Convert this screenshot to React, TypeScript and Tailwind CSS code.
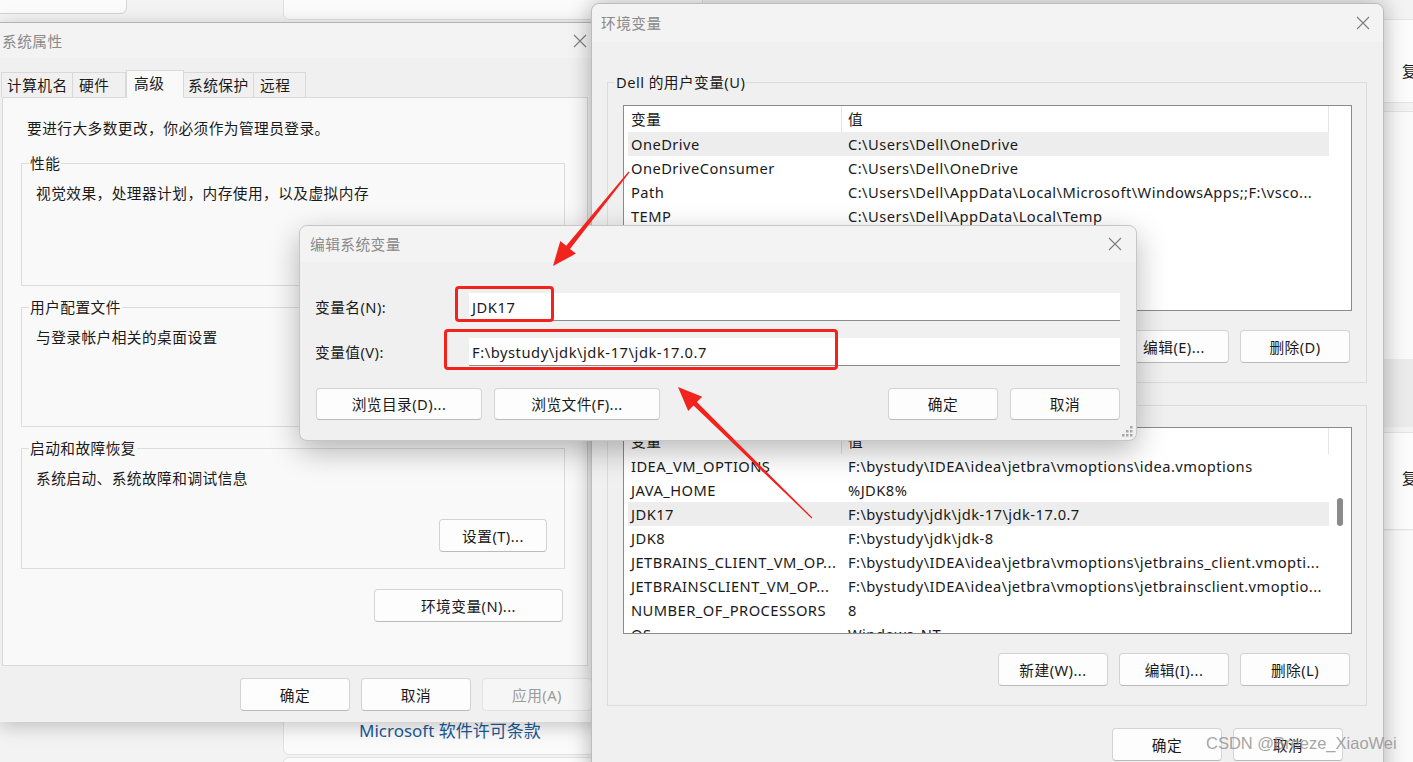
import React from 'react';

type Row = [string, string];

const userRows: Row[] = [
  ['OneDrive', 'C:\\Users\\Dell\\OneDrive'],
  ['OneDriveConsumer', 'C:\\Users\\Dell\\OneDrive'],
  ['Path', 'C:\\Users\\Dell\\AppData\\Local\\Microsoft\\WindowsApps;;F:\\vsco...'],
  ['TEMP', 'C:\\Users\\Dell\\AppData\\Local\\Temp'],
  ['TMP', 'C:\\Users\\Dell\\AppData\\Local\\Temp'],
];

const sysRows: Row[] = [
  ['IDEA_VM_OPTIONS', 'F:\\bystudy\\IDEA\\idea\\jetbra\\vmoptions\\idea.vmoptions'],
  ['JAVA_HOME', '%JDK8%'],
  ['JDK17', 'F:\\bystudy\\jdk\\jdk-17\\jdk-17.0.7'],
  ['JDK8', 'F:\\bystudy\\jdk\\jdk-8'],
  ['JETBRAINS_CLIENT_VM_OP...', 'F:\\bystudy\\IDEA\\idea\\jetbra\\vmoptions\\jetbrains_client.vmopti...'],
  ['JETBRAINSCLIENT_VM_OP...', 'F:\\bystudy\\IDEA\\idea\\jetbra\\vmoptions\\jetbrainsclient.vmoptio...'],
  ['NUMBER_OF_PROCESSORS', '8'],
  ['OS', 'Windows_NT'],
];

function CloseX() {
  return (
    <svg width="14" height="14" viewBox="0 0 14 14" className="shrink-0">
      <path d="M1 1L13 13M13 1L1 13" stroke="#7d7d7d" strokeWidth="1.1" />
    </svg>
  );
}

function Btn({
  children,
  className = 'w-[110px] h-[33px]',
  disabled = false,
}: {
  children: React.ReactNode;
  className?: string;
  disabled?: boolean;
}) {
  return (
    <div
      className={`${className} shrink-0 rounded-[4px] border flex items-center justify-center whitespace-nowrap ${
        disabled
          ? 'bg-[#f6f6f6] border-[#e3e3e3] text-[#9b9b9b]'
          : 'bg-[#fdfdfd] border-[#d3d3d3] border-b-[#bababa]'
      }`}
    >
      {children}
    </div>
  );
}

function Group({ label, className, children }: { label: string; className: string; children: React.ReactNode }) {
  return (
    <fieldset className={`border border-[#dcdcdc] ${className}`}>
      <legend className="ml-[7px] px-[1px] leading-[20px]">{label}</legend>
      {children}
    </fieldset>
  );
}

function ListView({ rows, active, h, thumb = false }: { rows: Row[]; active: number; h: string; thumb?: boolean }) {
  return (
    <div className={`ml-[15px] w-[729px] ${h} shrink-0 border border-[#8b8b8b] bg-white flex overflow-hidden`}>
      <div className="w-[705px] flex flex-col">
        <div className="h-[26px] shrink-0 flex">
          <div className="w-[218px] border-r border-[#e5e5e5] pl-[7px] flex items-center">变量</div>
          <div className="w-[487px] border-r border-[#e5e5e5] pl-[6px] flex items-center">值</div>
        </div>
        {rows.map((r, i) => (
          <div
            key={r[0]}
            className={`ml-[4px] w-[701px] h-[24px] shrink-0 flex items-center whitespace-nowrap ${
              i === active ? 'bg-[#ededed]' : ''
            }`}
          >
            <div className="w-[214px] pl-[3px] overflow-hidden">{r[0]}</div>
            <div className="pl-[6px] overflow-hidden">{r[1]}</div>
          </div>
        ))}
      </div>
      <div className="w-[22px] flex justify-center">
        {thumb && <div className="mt-[70px] w-[6px] h-[28px] rounded-[3px] bg-[#8a8a8a]" />}
      </div>
    </div>
  );
}

function Backdrop() {
  return (
    <>
      <div className="absolute left-[-10px] top-[-10px] w-[137px] h-[24px] rounded-[6px] border border-[#d4d4d4] bg-[#fbfbfb]" />
      <div className="absolute left-[283px] top-[-10px] w-[420px] h-[30px] rounded-[6px] border border-[#e1e1e1] bg-[#fbfbfb]" />
      <div className="absolute left-[283px] top-[690px] w-[420px] h-[65px] rounded-[6px] border border-[#e1e1e1] bg-[#fbfbfb] pt-[29px] pl-[75px]">
        <span className="text-[17px] leading-[22px] tracking-normal text-[#1d5a96] whitespace-nowrap">Microsoft 软件许可条款</span>
      </div>
      <div className="absolute left-[283px] top-[757px] w-[420px] h-[30px] rounded-[6px] border border-[#e1e1e1] bg-[#fbfbfb]" />

      <div className="absolute left-[1375px] top-[19px] w-[60px] h-[84px] border-y border-[#e3e3e3] bg-[#fcfcfc] pt-[41px] pl-[27px]">
        <span>复</span>
      </div>
      <div className="absolute left-[1375px] top-[111px] w-[60px] h-[248px] border-t border-[#e3e3e3] bg-[#fafafa]" />
      <div className="absolute left-[1375px] top-[359px] w-[60px] h-[68px] bg-[#ebebeb]" />
      <div className="absolute left-[1375px] top-[432px] w-[60px] h-[98px] border-y border-[#e3e3e3] bg-[#fcfcfc] pt-[35px] pl-[27px]">
        <span>复</span>
      </div>
      <div className="absolute left-[1375px] top-[531px] w-[60px] h-[240px] bg-[#fafafa]" />
    </>
  );
}

function Tab({ w, pl, active = false, children }: { w: string; pl: string; active?: boolean; children: React.ReactNode }) {
  return (
    <div
      className={`${w} ${pl} shrink-0 border border-b-0 border-[#d9d9d9] flex items-center ${
        active ? 'h-[28px] mb-[-1px] bg-[#f9f9f9] relative z-10 pb-[3px]' : 'h-[25px] bg-[#f0f0f0] -ml-px'
      }`}
    >
      {children}
    </div>
  );
}

function SystemProps() {
  return (
    <div className="absolute left-0 top-[22px] w-[600px] h-[700px] bg-[#f0f0f0] border-t border-[#b4b4b4] shadow-[0_4px_18px_rgba(0,0,0,0.22)] flex flex-col">
      <div className="h-[35px] shrink-0 bg-[#f3f3f3] flex items-center justify-between pl-[2px] pr-[13px]">
        <span className="text-[#8a8a8a]">系统属性</span>
        <CloseX />
      </div>
      <div className="pl-[2px] pt-[12px] flex flex-col">
        <div className="flex items-end h-[27px]">
          <Tab w="w-[72px]" pl="pl-[5px]">计算机名</Tab>
          <Tab w="w-[54px]" pl="pl-[6px]">硬件</Tab>
          <Tab w="w-[58px]" pl="pl-[7px]" active>
            高级
          </Tab>
          <Tab w="w-[71px]" pl="pl-[4px]">系统保护</Tab>
          <Tab w="w-[53px]" pl="pl-[6px]">远程</Tab>
        </div>
        <div className="w-[586px] h-[569px] shrink-0 border border-[#d9d9d9] bg-[#f9f9f9] pl-[18px] pt-[20px] flex flex-col">
          <div className="pl-[6px]">要进行大多数更改，你必须作为管理员登录。</div>
          <Group label="性能" className="mt-[15px] w-[544px]">
            <div className="h-[112px] pl-[14px] pt-[10px]">视觉效果，处理器计划，内存使用，以及虚拟内存</div>
          </Group>
          <Group label="用户配置文件" className="mt-[11px] w-[544px]">
            <div className="h-[109px] pl-[14px] pt-[10px]">与登录帐户相关的桌面设置</div>
          </Group>
          <Group label="启动和故障恢复" className="mt-[11px] w-[544px]">
            <div className="h-[110px] pl-[14px] pt-[10px] flex flex-col">
              <div>系统启动、系统故障和调试信息</div>
              <div className="mt-[31px] self-end mr-[17px]">
                <Btn className="w-[108px] h-[33px]">设置(T)...</Btn>
              </div>
            </div>
          </Group>
          <div className="mt-[20px] w-[544px] flex justify-end pr-[2px]">
            <Btn className="w-[189px] h-[33px]">环境变量(N)...</Btn>
          </div>
        </div>
        <div className="mt-[12px] ml-[238px] flex gap-[11px]">
          <Btn>确定</Btn>
          <Btn>取消</Btn>
          <Btn disabled>应用(A)</Btn>
        </div>
      </div>
    </div>
  );
}

function EnvWindow() {
  return (
    <div className="absolute left-[591px] top-[3px] w-[793px] h-[790px] rounded-t-[8px] border border-[#bdbdbd] bg-[#f0f0f0] shadow-[0_0_22px_rgba(0,0,0,0.3)] flex flex-col">
      <div className="h-[38px] shrink-0 rounded-t-[8px] bg-[#f3f3f3] flex items-center justify-between pl-[9px] pr-[13px]">
        <span className="text-[#8a8a8a]">环境变量</span>
        <CloseX />
      </div>
      <div className="pl-[15px] flex flex-col">
        <Group label="Dell 的用户变量(U)" className="mt-[30px] w-[760px]">
          <div className="pt-[13px] pb-[19px] flex flex-col">
            <ListView rows={userRows} active={0} h="h-[206px]" />
            <div className="mt-[19px] pr-[16px] flex justify-end gap-[11px]">
              <Btn>新建(N)...</Btn>
              <Btn>编辑(E)...</Btn>
              <Btn>删除(D)</Btn>
            </div>
          </div>
        </Group>
        <Group label="系统变量(S)" className="mt-[12px] w-[760px]">
          <div className="pt-[12px] pb-[19px] flex flex-col">
            <ListView rows={sysRows} active={2} h="h-[207px]" thumb />
            <div className="mt-[19px] pr-[16px] flex justify-end gap-[11px]">
              <Btn>新建(W)...</Btn>
              <Btn>编辑(I)...</Btn>
              <Btn>删除(L)</Btn>
            </div>
          </div>
        </Group>
        <div className="mt-[22px] w-[760px] pr-[24px] flex justify-end gap-[11px]">
          <Btn>确定</Btn>
          <Btn>取消</Btn>
        </div>
      </div>
    </div>
  );
}

function Field({ label, value, className }: { label: string; value: string; className: string }) {
  return (
    <div className={`${className} flex items-center`}>
      <div className="w-[154px] shrink-0">{label}</div>
      <div className="w-[651px] h-[28px] bg-white border-b border-[#8c8c8c] pl-[3px] flex items-center whitespace-nowrap tracking-[0.55px]">
        {value}
      </div>
    </div>
  );
}

function Grip() {
  return (
    <svg width="12" height="12" viewBox="0 0 12 12" className="absolute right-[3px] bottom-[3px]">
      {[
        [9, 1],
        [5, 5],
        [9, 5],
        [1, 9],
        [5, 9],
        [9, 9],
      ].map(([x, y]) => (
        <rect key={`${x}-${y}`} x={x} y={y} width="2.5" height="2.5" fill="#a8a8a8" />
      ))}
    </svg>
  );
}

function EditDialog() {
  return (
    <div className="absolute left-[299px] top-[225px] w-[838px] h-[216px] rounded-[8px] border border-[#c6c6c6] bg-[#f0f0f0] shadow-[0_10px_30px_rgba(0,0,0,0.28)] flex flex-col">
      <div className="h-[36px] shrink-0 rounded-t-[8px] bg-[#f3f3f3] flex items-center justify-between pl-[10px] pr-[14px]">
        <span className="text-[#8a8a8a]">编辑系统变量</span>
        <CloseX />
      </div>
      <div className="pl-[15px] pr-[16px] flex flex-col">
        <Field label="变量名(N):" value="JDK17" className="mt-[31px]" />
        <Field label="变量值(V):" value={'F:\\bystudy\\jdk\\jdk-17\\jdk-17.0.7'} className="mt-[17px]" />
        <div className="mt-[22px] ml-[1px] flex gap-[12px]">
          <Btn className="w-[166px] h-[32px]">浏览目录(D)...</Btn>
          <Btn className="w-[166px] h-[32px]">浏览文件(F)...</Btn>
          <div className="flex-1" />
          <Btn className="w-[110px] h-[32px]">确定</Btn>
          <Btn className="w-[110px] h-[32px]">取消</Btn>
        </div>
      </div>
      <Grip />
    </div>
  );
}

function Annotations() {
  return (
    <>
      <div className="absolute left-[455px] top-[286px] w-[99px] h-[36px] rounded-[4px] border-[3px] border-[#f2231d]" />
      <div className="absolute left-[444px] top-[329px] w-[394px] h-[41px] rounded-[4px] border-[3px] border-[#f2231d]" />
      <svg className="absolute left-0 top-0 pointer-events-none" width="1413" height="762" viewBox="0 0 1413 762">
        <polygon
          points="629.5,172.4 570.0,248.9 575.9,253.6 553,266 560.3,241.0 566.2,245.7 628.5,171.6"
          fill="#f2231d"
        />
        <polygon
          points="812.4,517.6 696.9,402.0 702.2,396.7 678,387 688.2,411.0 693.5,405.6 811.6,518.4"
          fill="#f2231d"
        />
      </svg>
      <div className="absolute left-[1206px] top-[733px] font-['Liberation_Sans',sans-serif] text-[16.5px] leading-[20px] tracking-normal text-[#8e8e8e]/80 whitespace-nowrap pointer-events-none">
        CSDN @Breeze_XiaoWei
      </div>
    </>
  );
}

export default function App() {
  return (
    <div className="relative w-[1413px] h-[762px] overflow-hidden bg-[#f3f3f3] font-['Noto_Sans','Noto_Sans_CJK_SC',sans-serif] text-[14.7px] leading-[20px] tracking-[0.45px] text-[#1a1a1a]">
      <Backdrop />
      <SystemProps />
      <EnvWindow />
      <EditDialog />
      <Annotations />
    </div>
  );
}
